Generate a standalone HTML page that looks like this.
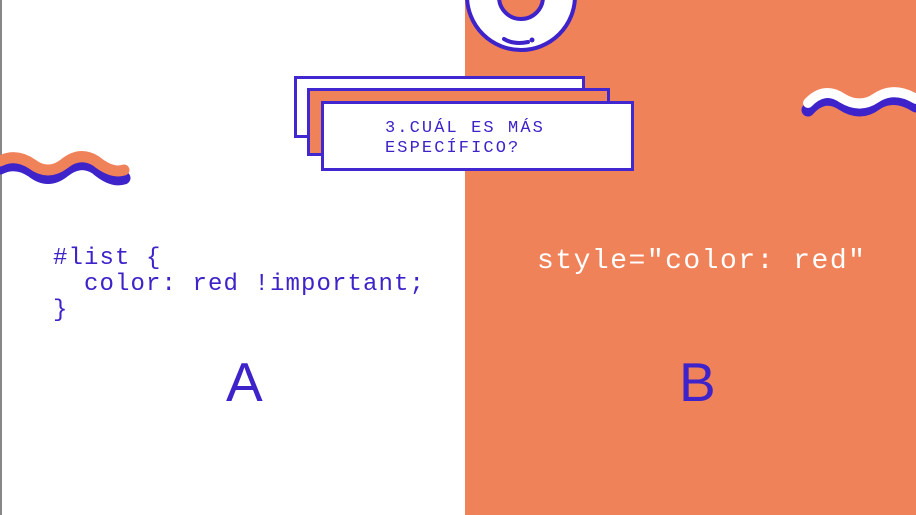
<!DOCTYPE html>
<html><head><meta charset="utf-8"><style>
body{margin:0;width:916px;height:515px;overflow:hidden;background:#fff;position:relative;font-family:"Liberation Mono",monospace}
.abs{position:absolute}
.box{position:absolute;border:3px solid #4127cf;box-sizing:border-box}
</style></head><body>
<div class="abs" style="left:0;top:0;width:2px;height:515px;background:#888"></div>
<div class="abs" style="left:465px;top:0;width:451px;height:515px;background:#f0825a"></div>
<svg class="abs" style="left:0;top:0" width="916" height="515">
<circle cx="521" cy="-4" r="54" fill="#fff" stroke="#3d23c9" stroke-width="4"/>
<circle cx="521" cy="-3" r="22" fill="#f0825a" stroke="#3d23c9" stroke-width="4"/>
<path d="M504 39 Q514 45 528 42" fill="none" stroke="#3d23c9" stroke-width="4" stroke-linecap="round"/>
<circle cx="532" cy="40" r="2.5" fill="#3d23c9"/>
<path d="M0 168 Q16 160 32 171 Q48 184 64 171 Q80 158 96 168 Q112 182 124 178" fill="none" stroke="#3d23c9" stroke-width="13" stroke-linecap="round"/>
<path d="M0 161 Q16 153 32 164 Q48 176 64 164 Q80 151 96 161 Q112 174 124 170" fill="none" stroke="#f0825a" stroke-width="11" stroke-linecap="round"/>
<path d="M808 110 Q824 92 842 104 Q860 116 876 104 Q894 92 916 106" fill="none" stroke="#3d23c9" stroke-width="13" stroke-linecap="round"/>
<path d="M808 103 Q824 86 842 98 Q860 109 876 98 Q894 86 916 99" fill="none" stroke="#fff" stroke-width="10" stroke-linecap="round"/>
</svg>
<div class="box" style="left:294px;top:76px;width:291px;height:62px;background:#fff"></div>
<div class="box" style="left:307px;top:88px;width:303px;height:68px;background:#f0825a"></div>
<div class="box" style="left:321px;top:101px;width:313px;height:70px;background:#fff"></div>
<div class="abs" style="left:385px;top:119px;color:#3d23c9;font-size:17px;letter-spacing:2.1px;line-height:20px">3.CUÁL ES MÁS<br>ESPECÍFICO?</div>
<div class="abs" style="left:53px;top:246px;color:#3d23c9;font-size:24px;letter-spacing:1.1px;line-height:26px;white-space:pre">#list {
  color: red !important;
}</div>
<div class="abs" style="left:537px;top:246px;color:#fff;font-size:28px;letter-spacing:1.5px;line-height:32px;white-space:pre">style="color: red"</div>
<div class="abs" style="left:226px;top:350px;color:#3d23c9;font-family:'Liberation Sans',sans-serif;font-size:55px;line-height:64px">A</div>
<div class="abs" style="left:679px;top:350px;color:#3d23c9;font-family:'Liberation Sans',sans-serif;font-size:55px;line-height:64px">B</div>
</body></html>
